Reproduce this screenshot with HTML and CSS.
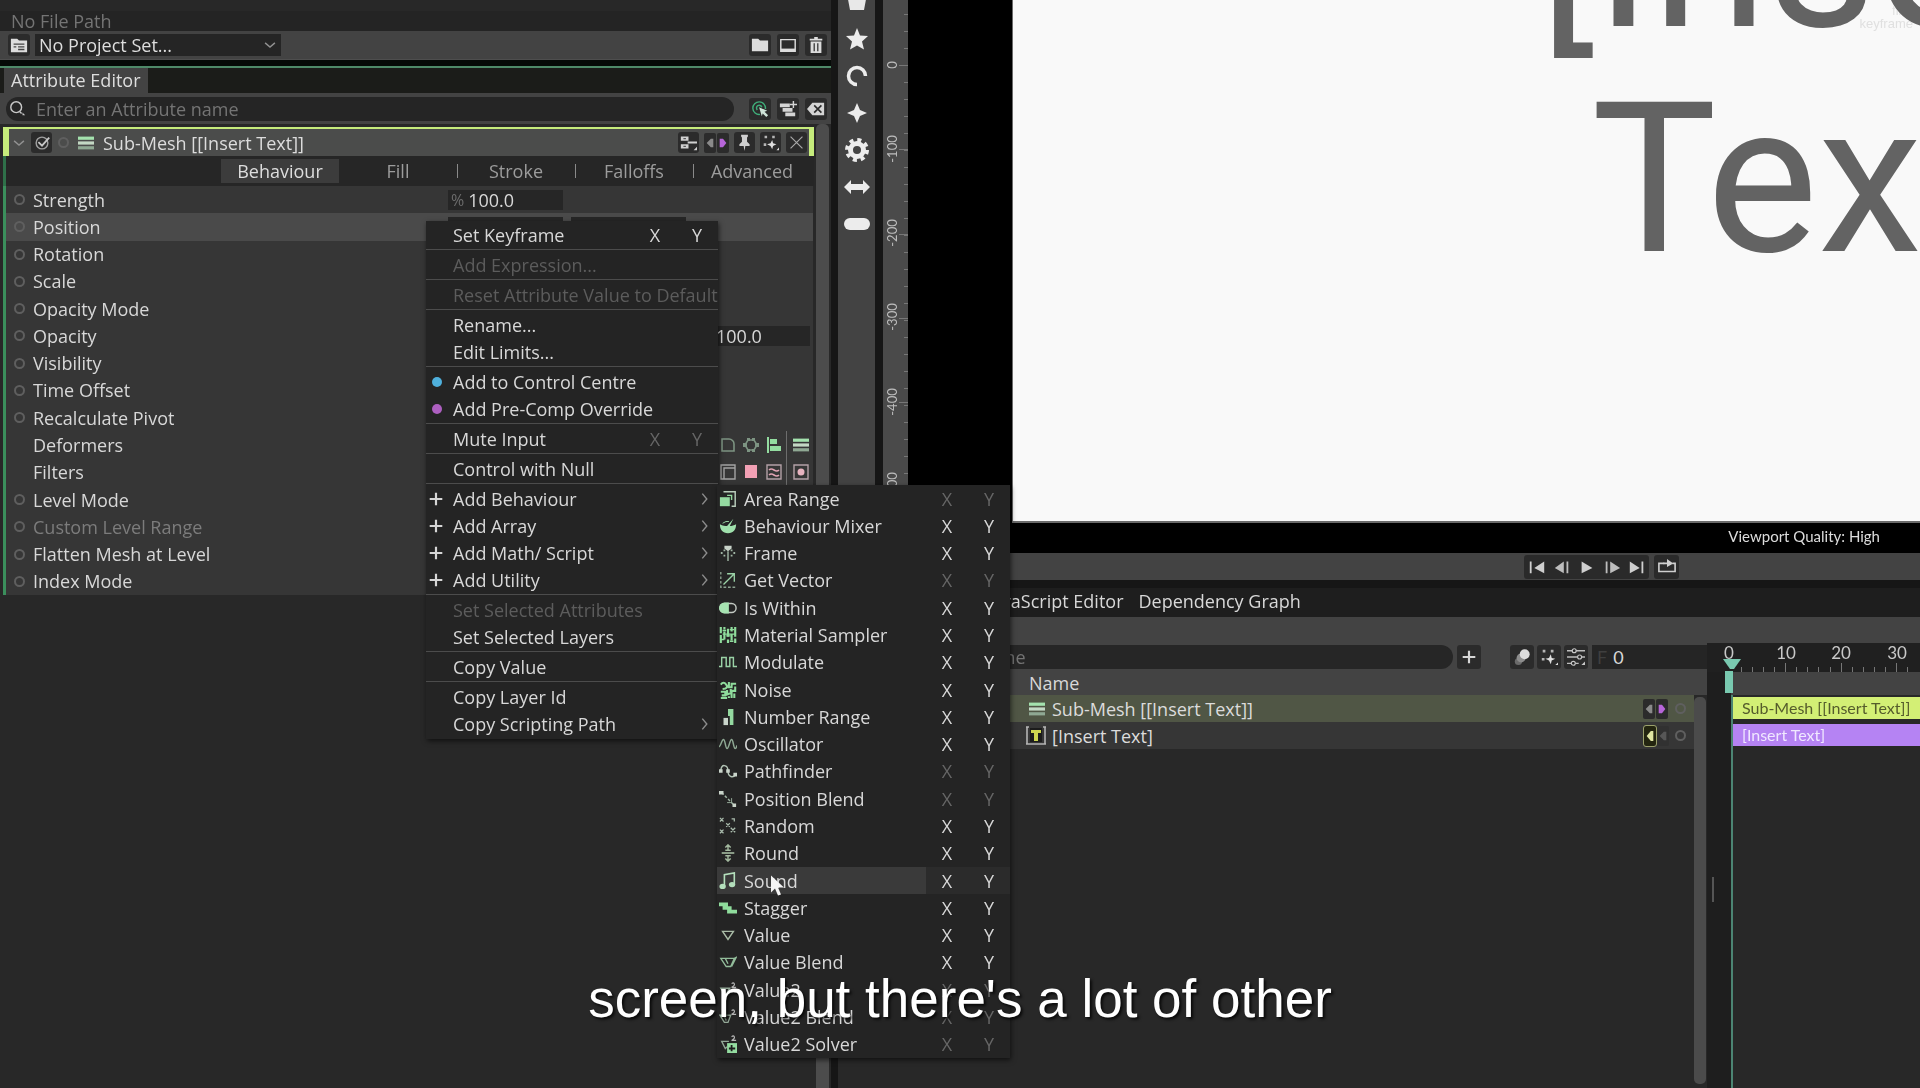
FILE: index.html
```html
<!DOCTYPE html>
<html lang="en">
<head>
<meta charset="utf-8">
<title>Attribute Editor</title>
<link rel="stylesheet" href="styles.css">
</head>
<body>
<svg class="defs" aria-hidden="true">
  <symbol id="i-library" viewBox="0 0 20 20"><path d="M1 3h7l2 2h9v13H1z" fill="#dcdcdc"/><path d="M4 9h12M4 12h3M9 12h7M9 15h7" stroke="#444" stroke-width="1.5"/></symbol>
  <symbol id="i-folder" viewBox="0 0 20 20"><path d="M1 3h7l2 2h9v12H1z" fill="#dcdcdc"/></symbol>
  <symbol id="i-screen" viewBox="0 0 20 20"><path d="M2 4h16v13H2z" fill="none" stroke="#dcdcdc" stroke-width="1.6"/><path d="M2 14h16v3H2z" fill="#dcdcdc"/></symbol>
  <symbol id="i-trash" viewBox="0 0 20 20"><path d="M3 3h5V1h4v2h5v2H3zM4 6h12v13H4z" fill="#dcdcdc"/><path d="M8 8v9M12 8v9" stroke="#333" stroke-width="1.4"/></symbol>
  <symbol id="i-search" viewBox="0 0 20 20"><circle cx="8" cy="8" r="6" fill="none" stroke="#c8c8c8" stroke-width="1.6"/><path d="M12 13l2 2" stroke="#c8c8c8" stroke-width="1.6"/><path d="M15 14l3 3h-3z" fill="#c8c8c8"/></symbol>
  <symbol id="i-target" viewBox="0 0 20 20"><path d="M10 16a7 7 0 1 1 6-6M7 11a3 3 0 1 1 5-3" fill="none" stroke="#3fae7a" stroke-width="1.6"/><path d="M9 8l9 4-3 1 4 4-2 2-4-4-1 3z" fill="#cfe3d8"/></symbol>
  <symbol id="i-stackadd" viewBox="0 0 20 20"><path d="M1 4h11v4H1zM4 9h11v4H4zM7 14h11v4H7z" fill="#d4d4d4"/><path d="M16 1v8M12 5h8" stroke="#d4d4d4" stroke-width="1.6"/></symbol>
  <symbol id="i-erase" viewBox="0 0 20 20"><path d="M6 3h13v14H6l-6-7z" fill="#d4d4d4"/><path d="M8 6l8 8M16 6l-8 8" stroke="#2a2a2a" stroke-width="1.8"/></symbol>
  <symbol id="i-lines" viewBox="0 0 20 20"><path d="M0 2h20v4H0z" fill="#a4e2ae"/><path d="M0 8h20v4H0z" fill="#c3d8c4"/><path d="M0 14h20v4H0z" fill="#8fa893"/></symbol>
  <symbol id="i-check" viewBox="0 0 20 20"><circle cx="10" cy="10" r="6.500" fill="none" stroke="#a0a0a0" stroke-width="1.6"/><path d="M6 9l4 4 8-9" fill="none" stroke="#c8c8c8" stroke-width="2"/></symbol>
  <symbol id="i-node" viewBox="0 0 20 20"><path d="M1 3h9v5H1zM1 12h9v5H1z" fill="#d0d0d0"/><path d="M4 5.500h3M4 14.500h3" stroke="#222"/><path d="M9 10h11" stroke="#d0d0d0" stroke-width="2.400"/><path d="M16 19l4-4v4z" fill="#d0d0d0"/></symbol>
  <symbol id="i-pin" viewBox="0 0 20 20"><path d="M6 1h8v2l-1 1v5l3 3v2h-5l-1 6-1-6H4v-2l3-3V4L6 3z" fill="#cfcfcf"/></symbol>
  <symbol id="i-sparkdots" viewBox="0 0 20 20"><path d="M3 2h3v3H3zM12 2h3v3h-3zM2 11h3v3H2z" fill="#b5b5b5"/><path d="M12 7l1 4 4 1-4 2-1 4-2-4-4-2 4-1zM17 19l3-3v3z" fill="#dedede"/></symbol>
  <symbol id="i-x" viewBox="0 0 20 20"><path d="M3 3l14 14M17 3L3 17" stroke="#a8a8a8" stroke-width="1.4"/></symbol>
  <symbol id="i-down" viewBox="0 0 20 20"><path d="M3 7l7 6 7-6" fill="none" stroke="#909090" stroke-width="2"/></symbol>
  <symbol id="i-right" viewBox="0 0 12 20"><path d="M3 4l5 6-5 6" fill="none" stroke="#8c8c8c" stroke-width="1.6"/></symbol>
  <symbol id="i-plus" viewBox="0 0 20 20"><path d="M10 3v14M3 10h14" stroke="#d6d6d6" stroke-width="2.4"/></symbol>
  <symbol id="i-left-arrow" viewBox="0 0 12 20"><path d="M10 5v10H7l-5-5 5-5z" fill="#8a8a8a"/></symbol>
  <symbol id="i-left-lime" viewBox="0 0 12 20"><path d="M10 4v12H7L2 10l5-6z" fill="#dfe5a2"/></symbol>
  <symbol id="i-right-purple" viewBox="0 0 12 20"><path d="M2 5v10h4l4-5-4-5z" fill="#b765d9"/></symbol>

  <symbol id="t-penta" viewBox="0 0 24 24"><path d="M2 4h20l-3 16H5z" fill="#e8e8e8"/></symbol>
  <symbol id="t-star" viewBox="0 0 24 24"><path d="M12 1l3 7.500 8 .500-6 5.500 2 8-7-4-7 4 2-8L1 9l8-.500z" fill="#ececec"/></symbol>
  <symbol id="t-arc" viewBox="0 0 24 24"><path d="M12 20.500A8.500 8.500 0 1 1 20.500 12" fill="none" stroke="#ececec" stroke-width="3.500"/></symbol>
  <symbol id="t-spark" viewBox="0 0 24 24"><path d="M12 2l3 7 7 3-7 3-3 7-3-7-7-3 7-3z" fill="#ececec"/></symbol>
  <symbol id="t-gear" viewBox="0 0 24 24"><circle cx="12" cy="12" r="6.500" fill="none" stroke="#ececec" stroke-width="5"/><circle cx="12" cy="12" r="10" fill="none" stroke="#ececec" stroke-width="4" stroke-dasharray="4 3.850"/></symbol>
  <symbol id="t-arrows" viewBox="0 0 26 24"><path d="M0 12l7-7v4h12V5l7 7-7 7v-4H7v4z" fill="#ececec"/></symbol>
  <symbol id="t-pill" viewBox="0 0 26 24"><rect y="6" width="26" height="12" rx="6" fill="#ececec"/></symbol>

  <symbol id="d-corner" viewBox="0 0 16 16"><path d="M2 2h7a5 5 0 0 1 5 5v7H2z" fill="none" stroke="#7d9482" stroke-width="1.6"/></symbol>
  <symbol id="d-hex" viewBox="0 0 16 16"><path d="M5 3h6l3 5-3 5H5L2 8z" fill="none" stroke="#7d9482" stroke-width="1.6"/><path d="M4 1h3v3H4zM9 1h3v3H9zM0 6h4v4H0zM12 6h4v4h-4zM4 12h3v3H4zM9 12h3v3H9z" fill="#7d9482"/></symbol>
  <symbol id="d-bars" viewBox="0 0 16 16"><path d="M1 0h2v16H1zM4 2h7v5H4zM4 9h11v5H4z" fill="#93dca0"/></symbol>
  <symbol id="f-frame" viewBox="0 0 16 16"><path d="M1 1h14v14H1zM4 15V4h11" fill="none" stroke="#a3a3a3" stroke-width="1.4"/></symbol>
  <symbol id="f-solid" viewBox="0 0 16 16"><path d="M2 1h12v13H2z" fill="#f2a0b4"/></symbol>
  <symbol id="f-wave" viewBox="0 0 16 16"><path d="M1 1h14v14H1z" fill="none" stroke="#b3a0a6" stroke-width="1.4"/><path d="M3 6q2-2 5 0t5 0M3 11q2-2 5 0t5 0" fill="none" stroke="#e0a3b3" stroke-width="1.6"/></symbol>
  <symbol id="f-dot" viewBox="0 0 16 16"><path d="M1 1h14v14H1z" fill="none" stroke="#b3a0a6" stroke-width="1.4"/><circle cx="8" cy="8" r="3.500" fill="#e7b3bf"/></symbol>

  <symbol id="b-area" viewBox="0 0 20 20"><path d="M5 2h13v16h-4" fill="none" stroke="#b9cdbc" stroke-width="1.6"/><path d="M1 8h11v10H1z" fill="#94d9a0"/><path d="M9 6h5v5" fill="none" stroke="#94d9a0" stroke-width="1.600"/></symbol>
  <symbol id="b-mixer" viewBox="0 0 20 20"><path d="M1 8c3 2 6 2 8 2l7-8-4 8c2 0 5-1 7-2 0 6-3 10-9 10S1 14 1 8z" fill="#9fe0ac"/><path d="M4 7q4-3 7-2" stroke="#9fe0ac" fill="none"/></symbol>
  <symbol id="b-frame" viewBox="0 0 20 20"><path d="M6 2h8v3l-4 3-4-3z" fill="#c9d4ca"/><path d="M10 8v11" stroke="#9fb5a3" stroke-width="1.6"/><path d="M2 10h2M16 10h2M5 7h2M13 7h2M5 13h2M13 13h2" stroke="#9fb5a3" stroke-width="2"/></symbol>
  <symbol id="b-vector" viewBox="0 0 20 20"><path d="M2 1v17h17" fill="none" stroke="#8ba290" stroke-width="1.500" stroke-dasharray="3 2"/><path d="M5 15L17 3M9 3h8v9" fill="none" stroke="#9ad2a6" stroke-width="1.500"/></symbol>
  <symbol id="b-within" viewBox="0 0 20 20"><rect x="1" y="5" width="18" height="10" rx="5" fill="none" stroke="#c3c9c3" stroke-width="1.600"/><path d="M11 4H6a6 6 0 0 0 0 12h5z" fill="#a6e3b1"/></symbol>
  <symbol id="b-material" viewBox="0 0 20 20"><path d="M2 1v7M2 10v9M6 1v3M6 6v9M10 3v9M10 15v4M14 1v5M14 9v7M18 1v11M18 14v5" stroke="#8fdc9c" stroke-width="2.400"/><path d="M4 5h4M8 11h5M12 4h5M2 15h4M12 17h4M4 9h14" stroke="#8fdc9c" stroke-width="1.600"/></symbol>
  <symbol id="b-modulate" viewBox="0 0 20 20"><path d="M0 15h3V5h5v10h4V5h4v10h4" fill="none" stroke="#9ad2a6" stroke-width="1.600"/></symbol>
  <symbol id="b-noise" viewBox="0 0 20 20"><path d="M2 4q3-4 6 0t-4 5M11 1v6h3V3h5M18 6v5h-5v-2M2 12h5v4H3M9 10v5l5-2v6M17 14v5M2 19h7M11 17v2" fill="none" stroke="#8fdc9c" stroke-width="2.300"/></symbol>
  <symbol id="b-number" viewBox="0 0 20 20"><path d="M5 11h5v8H5z" fill="#c9d4ca"/><path d="M10 1h6v18h-4V9h-2z" fill="#94d9a0"/></symbol>
  <symbol id="b-osc" viewBox="0 0 20 20"><path d="M0 13C2 13 3 5 5 5s2 10 4 10 3-10 5-10 2 10 4 10 1-3 2-3" fill="none" stroke="#8fa994" stroke-width="1.600"/></symbol>
  <symbol id="b-path" viewBox="0 0 20 20"><path d="M2 10c0-9 8-7 8 0s6 8 8 4" fill="none" stroke="#b3c4b6" stroke-width="1.600"/><path d="M0 8h4v4H0zM16 12h4v4h-4zM8 8h4v4H8z" fill="#c9d4ca"/></symbol>
  <symbol id="b-posblend" viewBox="0 0 20 20"><path d="M3 3l14 14" stroke="#9fb5a3" stroke-width="1.600" stroke-dasharray="3 2"/><path d="M0 1h5v4H0zM15 15h4v4h-4z" fill="#c9d4ca"/><path d="M14 9v5H9" fill="none" stroke="#9fb5a3"/></symbol>
  <symbol id="b-random" viewBox="0 0 20 20"><path d="M1 1l4 4M5 1L1 5M14 2h3v3M8 7l4 4M12 7l-4 4M1 14l4 4M5 14l-4 4M13 12l5 5M18 12l-5 5" fill="none" stroke="#a9bbac" stroke-width="1.400"/></symbol>
  <symbol id="b-round" viewBox="0 0 20 20"><path d="M3 10h14" stroke="#a3b99f" stroke-width="1.800"/><path d="M10 1v6M10 13v6M7 4l3-3 3 3M7 16l3 3 3-3M7 7h6M7 13h6" fill="none" stroke="#a3b99f" stroke-width="1.600"/></symbol>
  <symbol id="b-sound" viewBox="0 0 20 20"><path d="M6 16V3l11-2v13" fill="none" stroke="#b4dfbc" stroke-width="1.800"/><ellipse cx="4" cy="16" rx="3.500" ry="3" fill="#b4dfbc"/><ellipse cx="14.500" cy="14" rx="3.500" ry="3" fill="#b4dfbc"/></symbol>
  <symbol id="b-stagger" viewBox="0 0 20 20"><path d="M0 4h10v4H0zM4 8h10v4H4zM9 12h11v4H9z" fill="#8fdc9c"/></symbol>
  <symbol id="b-value" viewBox="0 0 20 20"><path d="M4 6h12l-6 9z" fill="none" stroke="#a9bba6" stroke-width="1.600"/></symbol>
  <symbol id="b-valueblend" viewBox="0 0 20 20"><path d="M2 6h15l-4 9H8zM7 6l3 6M17 6l2-1-5 10" fill="none" stroke="#93bd9b" stroke-width="1.500"/></symbol>
  <symbol id="b-value2" viewBox="0 0 20 20"><path d="M2 8h10l-5 8z" fill="none" stroke="#93a897" stroke-width="1.500"/><path d="M14 3q2-2 3 0t-3 4h5" fill="none" stroke="#b5b5b5" stroke-width="1.300"/></symbol>
  <symbol id="b-value2blend" viewBox="0 0 20 20"><path d="M1 8h12l-3 8H6zM6 9l2 5" fill="none" stroke="#93a897" stroke-width="1.500"/><path d="M14 3q2-2 3 0t-3 4h5" fill="none" stroke="#b5b5b5" stroke-width="1.300"/></symbol>
  <symbol id="b-value2solver" viewBox="0 0 20 20"><path d="M9 13l-2 2-4-8h8" fill="none" stroke="#93a897" stroke-width="1.500"/><path d="M14 2q2-2 3 0t-3 4h5" fill="none" stroke="#b5b5b5" stroke-width="1.300"/><path d="M9 9h11v11H9z" fill="#93dca0"/><path d="M14 11v7M11 15h7" stroke="#1c1c1c" stroke-width="2"/></symbol>

  <symbol id="p-first" viewBox="0 0 20 20"><path d="M2 4h2v13H2zM18 4v13l-11-6z" fill="#cfcfcf"/></symbol>
  <symbol id="p-prev" viewBox="0 0 20 20"><path d="M12 4v13L2 11zM15 4h2v13h-2z" fill="#bdbdbd"/></symbol>
  <symbol id="p-play" viewBox="0 0 20 20"><path d="M4 4l12 7-12 6z" fill="#cfcfcf"/></symbol>
  <symbol id="p-next" viewBox="0 0 20 20"><path d="M3 4h2v13H3zM8 4l11 7-11 6z" fill="#bdbdbd"/></symbol>
  <symbol id="p-last" viewBox="0 0 20 20"><path d="M2 4l11 7-11 6zM15 4h2v13h-2z" fill="#cfcfcf"/></symbol>
  <symbol id="p-loop" viewBox="0 0 20 20"><path d="M7 6H1v9h18V6h-3" fill="none" stroke="#cfcfcf" stroke-width="1.800"/><path d="M10 1l7 5-7 4V7H6V5h4z" fill="#cfcfcf"/></symbol>
  <symbol id="l-motion" viewBox="0 0 20 20"><circle cx="6" cy="15" r="4" fill="#6a6a6a"/><circle cx="9" cy="11" r="5" fill="#8d8d8d"/><circle cx="13" cy="7" r="5.500" fill="#dcdcdc"/></symbol>
  <symbol id="l-sliders" viewBox="0 0 20 20"><path d="M0 3h20M0 10h20M0 17h13" stroke="#bdbdbd" stroke-width="1.500"/><circle cx="8" cy="3" r="2.200" fill="#222" stroke="#c8c8c8" stroke-width="1.300"/><circle cx="14" cy="10" r="2.200" fill="#222" stroke="#c8c8c8" stroke-width="1.300"/><circle cx="7" cy="17" r="2.200" fill="#222" stroke="#c8c8c8" stroke-width="1.300"/><path d="M16 19l4-4v4z" fill="#c8c8c8"/></symbol>
  <symbol id="l-text" viewBox="0 0 20 20"><path d="M1 1v17h18V1M0 1h3M17 1h3M0 18h3M17 18h3" fill="none" stroke="#b5b5b5" stroke-width="1.600"/><path d="M4 2h12v14H4z" fill="#1c1c1c"/><path d="M5 4h10v3h-3v8H8V7H5z" fill="#cdd650"/></symbol>
</svg>

<main class="app">
  <section class="side">
    <div class="filepath">No File Path</div>
    <div class="project">
      <button class="ib" aria-label="Project library"><svg><use href="#i-library"/></svg></button>
      <button class="project-select"><span>No Project Set...</span><svg><use href="#i-down"/></svg></button>
      <div class="ibs push">
        <button class="ib" aria-label="Open folder"><svg><use href="#i-folder"/></svg></button>
        <button class="ib" aria-label="Show screen"><svg><use href="#i-screen"/></svg></button>
        <button class="ib" aria-label="Delete"><svg><use href="#i-trash"/></svg></button>
      </div>
    </div>
    <div class="panel-tabs"><button class="panel-tab">Attribute Editor</button></div>
    <div class="attr-search">
      <label class="search"><svg><use href="#i-search"/></svg><input type="text" placeholder="Enter an Attribute name" aria-label="Search attributes"></label>
      <div class="ibs">
        <button class="ib" aria-label="Follow selection"><svg><use href="#i-target"/></svg></button>
        <button class="ib" aria-label="Add to stack"><svg><use href="#i-stackadd"/></svg></button>
        <button class="ib" aria-label="Clear"><svg><use href="#i-erase"/></svg></button>
      </div>
    </div>
    <div class="attr-body">
      <div class="attr-main">
        <header class="card-head">
          <svg class="s14"><use href="#i-down"/></svg>
          <button class="ib" aria-label="Enabled"><svg><use href="#i-check"/></svg></button>
          <span class="ring"></span>
          <svg class="s16"><use href="#i-lines"/></svg>
          <h2>Sub-Mesh [[Insert Text]]</h2>
          <div class="head-tools">
            <button class="ib" aria-label="Connections"><svg><use href="#i-node"/></svg></button>
            <span class="pair"><svg><use href="#i-left-arrow"/></svg><svg><use href="#i-right-purple"/></svg></span>
            <button class="ib" aria-label="Pin"><svg><use href="#i-pin"/></svg></button>
            <button class="ib" aria-label="Effects"><svg><use href="#i-sparkdots"/></svg></button>
            <button class="ib" aria-label="Close"><svg><use href="#i-x"/></svg></button>
          </div>
        </header>
        <nav class="attr-tabs">
          <button class="on">Behaviour</button><button>Fill</button><button class="bar">Stroke</button><button class="bar">Falloffs</button><button class="bar">Advanced</button>
        </nav>
        <div class="props">
          <div class="prop"><span class="ring"></span><label for="strength">Strength</label><span class="field"><i>%</i><input id="strength" value="100.0"></span></div>
          <div class="prop active"><span class="ring"></span><label for="posx">Position</label><span class="field"><i>X</i><input id="posx"></span><span class="field"><i>Y</i><input aria-label="Position Y"></span></div>
          <div class="prop"><span class="ring"></span><span>Rotation</span></div>
          <div class="prop"><span class="ring"></span><span>Scale</span></div>
          <div class="prop"><span class="ring"></span><span>Opacity Mode</span></div>
          <div class="prop"><span class="ring"></span><label for="opacity">Opacity</label><span class="field wide"><input id="opacity" value="100.0"></span></div>
          <div class="prop"><span class="ring"></span><span>Visibility</span></div>
          <div class="prop"><span class="ring"></span><span>Time Offset</span></div>
          <div class="prop"><span class="ring"></span><span>Recalculate Pivot</span></div>
          <div class="prop"><span class="ring none"></span><span>Deformers</span><div class="mini"><svg><use href="#d-corner"/></svg><svg><use href="#d-hex"/></svg><svg><use href="#d-bars"/></svg><span class="last"><svg><use href="#i-lines"/></svg></span></div></div>
          <div class="prop"><span class="ring none"></span><span>Filters</span><div class="mini"><svg><use href="#f-frame"/></svg><svg><use href="#f-solid"/></svg><svg><use href="#f-wave"/></svg><span class="last"><svg><use href="#f-dot"/></svg></span></div></div>
          <div class="prop"><span class="ring"></span><span>Level Mode</span></div>
          <div class="prop off"><span class="ring"></span><span>Custom Level Range</span></div>
          <div class="prop"><span class="ring"></span><span>Flatten Mesh at Level</span></div>
          <div class="prop"><span class="ring"></span><span>Index Mode</span></div>
        </div>
      </div>
      <div class="scrollbar"></div>
    </div>
  </section>

  <section class="work">
    <div class="stage">
      <div class="tools">
        <button aria-label="Polygon"><svg><use href="#t-penta"/></svg></button>
        <button aria-label="Star"><svg><use href="#t-star"/></svg></button>
        <button aria-label="Arc"><svg><use href="#t-arc"/></svg></button>
        <button aria-label="Sparkle"><svg><use href="#t-spark"/></svg></button>
        <button aria-label="Gear"><svg><use href="#t-gear"/></svg></button>
        <button aria-label="Arrow"><svg><use href="#t-arrows"/></svg></button>
        <button aria-label="Capsule"><svg><use href="#t-pill"/></svg></button>
      </div>
      <svg class="ruler">
        <defs><pattern id="minor" y="65" width="25" height="17" patternUnits="userSpaceOnUse"><path d="M21 0.500h4" stroke="#777"/></pattern></defs>
        <rect width="25" height="100%" fill="url(#minor)"/>
        <path d="M16 65.500h9M16 149.500h9M16 234.500h9M16 318.500h9M16 402.500h9M16 486.500h9" stroke="#777"/>
        <g text-anchor="middle">
          <text transform="translate(14 65) rotate(-90)">0</text>
          <text transform="translate(14 149) rotate(-90)">-100</text>
          <text transform="translate(14 233) rotate(-90)">-200</text>
          <text transform="translate(14 317) rotate(-90)">-300</text>
          <text transform="translate(14 402) rotate(-90)">-400</text>
          <text transform="translate(14 486) rotate(-90)">-500</text>
        </g>
      </svg>
      <div class="viewport">
        <div class="canvas">
          <div class="canvas-text">[Insert<br>Text]</div>
          <div class="watermark">first<br>keyframe</div>
        </div>
        <div class="quality">Viewport Quality: High</div>
      </div>
    </div>
    <div class="transport">
      <div class="play">
        <button aria-label="First frame"><svg><use href="#p-first"/></svg></button><button aria-label="Previous frame"><svg><use href="#p-prev"/></svg></button><button aria-label="Play"><svg><use href="#p-play"/></svg></button><button aria-label="Next frame"><svg><use href="#p-next"/></svg></button><button aria-label="Last frame"><svg><use href="#p-last"/></svg></button>
      </div>
      <button class="loop" aria-label="Loop"><svg><use href="#p-loop"/></svg></button>
    </div>
    <div class="dock">
      <nav class="dock-tabs"><button>JavaScript Editor</button><button>Dependency Graph</button></nav>
      <div class="dock-strip"></div>
      <div class="dock-body">
        <div class="layers">
          <div class="layer-bar">
            <input class="layer-search" type="text" placeholder="Enter a Layer name" aria-label="Search layers">
            <button class="ib add" aria-label="Add layer"><svg><use href="#i-plus"/></svg></button>
            <div class="ibs">
              <button class="ib" aria-label="Motion blur"><svg><use href="#l-motion"/></svg></button>
              <button class="ib" aria-label="Effects"><svg><use href="#i-sparkdots"/></svg></button>
              <button class="ib" aria-label="Settings"><svg><use href="#l-sliders"/></svg></button>
            </div>
            <label class="frame"><i>F</i><input value="0" aria-label="Frame"></label>
          </div>
          <div class="layer-head">Name</div>
          <div class="layer-body">
            <div class="layer-list">
              <div class="layer sel"><svg class="s16"><use href="#i-lines"/></svg><span>Sub-Mesh [[Insert Text]]</span><span class="pair"><svg><use href="#i-left-arrow"/></svg><svg><use href="#i-right-purple"/></svg></span><span class="ring"></span></div>
              <div class="layer text"><svg class="s20"><use href="#l-text"/></svg><span>[Insert Text]</span><span class="pair lime"><svg><use href="#i-left-lime"/></svg><svg class="dim"><use href="#i-left-arrow"/></svg></span><span class="ring"></span></div>
            </div>
            <div class="layer-scroll"></div>
          </div>
        </div>
        <div class="splitter"></div>
        <div class="timeline">
          <svg class="frames">
            <path d="M34.500 24v5M45.500 24v5M56.500 24v5M67.500 24v5M78.500 20v9M89.500 24v5M100.500 24v5M111.500 24v5M123.500 24v5M134.500 20v9M145.500 24v5M156.500 24v5M167.500 24v5M178.500 24v5M189.500 20v9M200.500 24v5" stroke="#777"/>
            <g text-anchor="middle"><text x="22" y="16">0</text><text x="79" y="16">10</text><text x="134" y="16">20</text><text x="190" y="16">30</text></g>
          </svg>
          <div class="range"></div>
          <div class="clips">
            <div class="clip lime">Sub-Mesh [[Insert Text]]</div>
            <div class="clip purple">[Insert Text]</div>
          </div>
          <div class="playhead"><svg viewBox="0 0 18 34"><path d="M0 0h18l-7 10v0H7z" fill="#79c9b0"/><path d="M2 12h8v22H2z" fill="#79c9b0"/></svg></div>
        </div>
      </div>
    </div>
  </section>
</main>

<div class="menu context" role="menu">
  <div class="item"><button>Set Keyframe</button><button class="ax">X</button><button class="ax">Y</button></div>
  <hr>
  <div class="item off"><button>Add Expression...</button></div>
  <hr>
  <div class="item off"><button>Reset Attribute Value to Default</button></div>
  <hr>
  <div class="item"><button>Rename...</button></div>
  <div class="item"><button>Edit Limits...</button></div>
  <hr>
  <div class="item"><button><b class="dot blue"></b>Add to Control Centre</button></div>
  <div class="item"><button><b class="dot violet"></b>Add Pre-Comp Override</button></div>
  <hr>
  <div class="item"><button>Mute Input</button><button class="ax no">X</button><button class="ax no">Y</button></div>
  <hr>
  <div class="item"><button>Control with Null</button></div>
  <hr>
  <div class="item"><button><svg class="lead"><use href="#i-plus"/></svg>Add Behaviour<svg class="more"><use href="#i-right"/></svg></button></div>
  <div class="item"><button><svg class="lead"><use href="#i-plus"/></svg>Add Array<svg class="more"><use href="#i-right"/></svg></button></div>
  <div class="item"><button><svg class="lead"><use href="#i-plus"/></svg>Add Math/ Script<svg class="more"><use href="#i-right"/></svg></button></div>
  <div class="item"><button><svg class="lead"><use href="#i-plus"/></svg>Add Utility<svg class="more"><use href="#i-right"/></svg></button></div>
  <hr>
  <div class="item off"><button>Set Selected Attributes</button></div>
  <div class="item"><button>Set Selected Layers</button></div>
  <hr>
  <div class="item"><button>Copy Value</button></div>
  <hr>
  <div class="item"><button>Copy Layer Id</button></div>
  <div class="item"><button>Copy Scripting Path<svg class="more"><use href="#i-right"/></svg></button></div>
</div>

<div class="menu sub" role="menu">
  <div class="item"><button><svg><use href="#b-area"/></svg>Area Range</button><button class="ax no">X</button><button class="ax no">Y</button></div>
  <div class="item"><button><svg><use href="#b-mixer"/></svg>Behaviour Mixer</button><button class="ax">X</button><button class="ax">Y</button></div>
  <div class="item"><button><svg><use href="#b-frame"/></svg>Frame</button><button class="ax">X</button><button class="ax">Y</button></div>
  <div class="item"><button><svg><use href="#b-vector"/></svg>Get Vector</button><button class="ax no">X</button><button class="ax no">Y</button></div>
  <div class="item"><button><svg><use href="#b-within"/></svg>Is Within</button><button class="ax">X</button><button class="ax">Y</button></div>
  <div class="item"><button><svg><use href="#b-material"/></svg>Material Sampler</button><button class="ax">X</button><button class="ax">Y</button></div>
  <div class="item"><button><svg><use href="#b-modulate"/></svg>Modulate</button><button class="ax">X</button><button class="ax">Y</button></div>
  <div class="item"><button><svg><use href="#b-noise"/></svg>Noise</button><button class="ax">X</button><button class="ax">Y</button></div>
  <div class="item"><button><svg><use href="#b-number"/></svg>Number Range</button><button class="ax">X</button><button class="ax">Y</button></div>
  <div class="item"><button><svg><use href="#b-osc"/></svg>Oscillator</button><button class="ax">X</button><button class="ax">Y</button></div>
  <div class="item"><button><svg><use href="#b-path"/></svg>Pathfinder</button><button class="ax no">X</button><button class="ax no">Y</button></div>
  <div class="item"><button><svg><use href="#b-posblend"/></svg>Position Blend</button><button class="ax no">X</button><button class="ax no">Y</button></div>
  <div class="item"><button><svg><use href="#b-random"/></svg>Random</button><button class="ax">X</button><button class="ax">Y</button></div>
  <div class="item"><button><svg><use href="#b-round"/></svg>Round</button><button class="ax">X</button><button class="ax">Y</button></div>
  <div class="item hover"><button><svg><use href="#b-sound"/></svg>Sound</button><button class="ax">X</button><button class="ax">Y</button></div>
  <div class="item"><button><svg><use href="#b-stagger"/></svg>Stagger</button><button class="ax">X</button><button class="ax">Y</button></div>
  <div class="item"><button><svg><use href="#b-value"/></svg>Value</button><button class="ax">X</button><button class="ax">Y</button></div>
  <div class="item"><button><svg><use href="#b-valueblend"/></svg>Value Blend</button><button class="ax">X</button><button class="ax">Y</button></div>
  <div class="item"><button><svg><use href="#b-value2"/></svg>Value2</button><button class="ax no">X</button><button class="ax no">Y</button></div>
  <div class="item"><button><svg><use href="#b-value2blend"/></svg>Value2 Blend</button><button class="ax no">X</button><button class="ax no">Y</button></div>
  <div class="item"><button><svg><use href="#b-value2solver"/></svg>Value2 Solver</button><button class="ax no">X</button><button class="ax no">Y</button></div>
</div>

<svg class="cursor" viewBox="0 0 13 20"><path d="M0 0v17l4-4 3 7 3-1-3-7h6z" fill="#f4f4f4"/></svg>
<p class="caption">screen, but there's a lot of other</p>
</body>
</html>
```
FILE: styles.css
```css
* { box-sizing: border-box; }
body {
  margin: 0;
  height: 100vh;
  overflow: hidden;
  position: relative;
  background: #161616;
  color: #d8d8d8;
  font: 18px/24px "Open Sans", "Noto Sans", sans-serif;
}
button, input { font: inherit; color: inherit; border: 0; margin: 0; padding: 0; background: none; min-width: 0; }
button { text-align: left; }
svg { display: block; flex: none; }
h2 { margin: 0; font: inherit; }
i { font-style: normal; }
.defs { position: absolute; width: 0; height: 0; }
.app { display: grid; grid-template-columns: 831fr 1089fr; height: 100%; }
.s14 { width: 14px; height: 14px; }
.s16 { width: 16px; height: 16px; }
.s20 { width: 20px; height: 20px; }

/* left panel */
.side { display: flex; flex-direction: column; background: #282828; padding-top: 11px; min-width: 0; }
.filepath { height: 20px; padding-left: 11px; line-height: 20px; color: #747474; background: #242424; }
.project { display: flex; align-items: center; height: 29px; padding: 0 4px 0 8px; background: #434343; border-bottom: 1px solid #4e4e4e; }
.project-select { display: flex; align-items: center; justify-content: space-between; width: 246px; height: 22px; margin-left: 5px; padding: 0 4px; background: #252525; line-height: 22px; color: #dedede; }
.project-select svg { width: 14px; height: 14px; }
.push { margin-left: auto; }
.ibs { display: flex; gap: 6px; }
.ib { display: flex; align-items: center; justify-content: center; width: 22px; height: 22px; border-radius: 3px; background: #2b2b2b; flex: none; }
.ib svg { width: 18px; height: 18px; }
.panel-tabs { display: flex; height: 33px; padding: 0 0 0 4px; border-top: 6px solid #060a07; background: linear-gradient(#4f8a69, #4f8a69) 0 0 / 100% 2px no-repeat #1b1c19; }
.panel-tab { height: 25px; margin-top: 2px; padding: 0 7px 2px; background: #434343; color: #dedede; }
.attr-search { display: flex; align-items: center; justify-content: space-between; height: 31px; padding: 0 4px 0 6px; background: #434343; }
.search { display: flex; align-items: center; gap: 9px; width: 728px; height: 24px; padding-left: 3px; border-radius: 12px; background: #252525; }
.search svg { width: 18px; height: 18px; }
.search input { flex: 1; height: 24px; }
input::placeholder { color: #747474; opacity: 1; }
.attr-body { display: flex; flex: 1; }
.attr-main { flex: 1; min-width: 0; padding-top: 3px; }
.scrollbar { width: 13px; margin-right: 2px; background: #4c4c4c; border-radius: 5px 5px 0 0; }
.card-head { display: flex; align-items: center; gap: 5px; height: 29px; margin: 0 2px 0 3px; padding: 0 2px 0 3px; background: #4b4c4b; border: solid #c6ec7c; border-width: 2px 5px 0 6px; }
.card-head .ring { margin: 0 4px 0 1px; }
.card-head h2 { margin-left: 4px; color: #dcdcdc; }
.head-tools { display: flex; gap: 5px; margin-left: auto; }
.head-tools .ib, .card-head > .ib { width: 21px; height: 21px; }
.head-tools svg { width: 17px; height: 17px; }
.pair { display: flex; align-items: center; gap: 1px; flex: none; }
.pair svg, .head-tools .pair svg { width: 12px; height: 20px; padding: 0 1px; background: #2b2b2b; border-radius: 2px; }
.pair.lime svg:first-child { outline: 1px solid #9aa06a; background: #23250f; }
.pair .dim { opacity: .4; }
.ring { width: 11px; height: 11px; border: 2px solid #5f5f5f; border-radius: 50%; flex: none; }
.ring.none { visibility: hidden; }
.attr-tabs { display: grid; grid-template-columns: repeat(5, 1fr); align-items: center; height: 30px; margin: 0 2px 0 3px; padding: 0 3px 0 215px; background: #262626; border-left: 3px solid #2f7049; color: #9c9c9c; }
.attr-tabs button { height: 24px; text-align: center; }
.attr-tabs .on { background: #3c3c3c; color: #dedede; }
.attr-tabs .bar { background: linear-gradient(#8a8a8a, #8a8a8a) 0 5px / 1px 14px no-repeat; }
.props { display: grid; grid-auto-rows: 1fr; height: 409px; margin: 0 3px; border-left: 3px solid #3b8f5c; background: #363636; }
.prop { display: flex; align-items: center; gap: 8px; padding: 0 3px 0 8px; min-height: 0; }
.prop > label, .prop > span:nth-child(2) { width: 407px; flex: none; }
.prop.active { background: #4a4a4a; }
.prop.off { color: #7c7c7c; }
.field { display: flex; align-items: center; gap: 4px; width: 115px; height: 20px; padding-left: 3px; background: #262626; color: #d8d8d8; line-height: 20px; }
.field i { color: #6c6c6c; font-size: 16px; }
.field input { width: 80px; height: 20px; }
.field.wide { flex: 1; padding-left: 268px; }
.mini { display: flex; align-items: center; gap: 7px; margin-left: auto; padding-right: 1px; align-self: stretch; }
.mini svg { width: 16px; height: 16px; }
.mini .last { display: flex; align-items: center; align-self: stretch; margin-left: -3px; border-left: 1px solid #6d6d6d; padding-left: 6px; }

/* stage */
.work { display: flex; flex-direction: column; min-width: 0; padding-left: 7px; }
.stage { display: flex; flex: 553; min-height: 0; overflow: hidden; }
.tools { display: flex; flex-direction: column; gap: 13px; width: 37px; margin-right: 8px; align-items: center; background: #434343; overflow: hidden; }
.tools button { display: block; height: 24px; }
.tools button:first-child { margin-top: -10px; }
.tools svg { width: 26px; height: 24px; }
.ruler { width: 25px; height: 100%; background: #4a4a4a; }
.ruler text { font: 13px Lato, sans-serif; fill: #bdbdbd; }
.viewport { display: flex; flex-direction: column; flex: 1; min-width: 0; background: #000; }
.canvas { position: relative; flex: 1; margin-left: 104px; overflow: hidden; background: #f9f9f9; border: solid #6b6b6b; border-width: 0 0 2px 1px; }
.canvas-text { position: absolute; left: 526px; bottom: 229px; width: 560px; text-align: center; font: 210px/225px Roboto, sans-serif; color: #636363; }
.watermark { position: absolute; right: 7px; top: 4px; text-align: right; font: 13px/13px "Liberation Sans", Arial, sans-serif; color: #e0e0e0; mix-blend-mode: darken; }
.quality { height: 30px; padding-right: 40px; text-align: right; font: 15px/26px Lato, sans-serif; color: #dcdcdc; }
.transport { display: flex; gap: 5px; height: 27px; padding: 2px 0 0 686px; background: #434343; }
.play { display: flex; border-radius: 3px; background: #2a2a2a; height: 24px; }
.play button, .loop { display: flex; align-items: center; justify-content: center; width: 25px; height: 24px; }
.loop { background: #2a2a2a; border-radius: 3px; }
.play svg, .loop svg { width: 18px; height: 18px; }

/* dock */
.dock { display: flex; flex-direction: column; flex: 500; margin-top: 8px; background: #282828; }
.dock-tabs { display: flex; gap: 15px; height: 29px; padding: 0 0 3px 149px; align-items: center; background: #1e1e1e; color: #d8d8d8; }
.dock-strip { height: 26px; background: #434343; }
.dock-body { display: grid; grid-template-columns: 869fr 213fr; flex: 1; position: relative; }
.layers { display: flex; flex-direction: column; background: #282828; }
.layer-bar { display: flex; align-items: center; height: 28px; background: #434343; }
.layer-search { flex: 1; height: 24px; margin-left: 20px; padding-left: 5px; background: #262626; border-radius: 0 12px 12px 0; }
.layer-bar .add { margin: 0 29px 0 4px; }
.layer-bar .ib { width: 24px; height: 24px; }
.layer-bar .ibs { gap: 3px; margin-right: 4px; }
.frame { display: flex; gap: 6px; width: 115px; height: 24px; padding-left: 5px; background: #252525; font-family: Lato, sans-serif; }
.frame i { color: #3f3f3f; }
.frame input { width: 60px; }
.layer-head { height: 24px; padding-left: 191px; background: #434343; }
.layer-body { display: flex; flex: 1; }
.layer-list { flex: 1; }
.layer { display: flex; align-items: center; gap: 7px; height: 27px; padding: 0 8px 0 191px; background: #505645; color: #dcdcdc; }
.layer.text { padding-left: 188px; gap: 6px; background: #363636; }
.layer .pair { margin-left: auto; }
.layer-scroll { width: 12px; margin: 2px 1px 4px 0; border-radius: 5px; background: #4b4b4b; }
.splitter { position: absolute; left: 874px; top: 234px; width: 2px; height: 25px; background: #555; z-index: 1; }
.timeline { position: relative; display: flex; flex-direction: column; min-width: 0; overflow: hidden; background: linear-gradient(90deg, #1e1e1e 24px, #282828 24px); }
.frames { width: 100%; height: 29px; background: #202020; }
.frames text { font: 17px Lato, sans-serif; fill: #c8c8c8; }
.range { height: 23px; margin-left: 24px; background: #434343; }
.clips { flex: 1; display: flex; flex-direction: column; gap: 5px; margin-left: 24px; padding-top: 2px; border-left: 2px solid #4c8573; }
.clip { height: 22px; padding-left: 9px; overflow: hidden; white-space: nowrap; font: 16px/22px Lato, sans-serif; }
.clip.lime { background: #d3ef75; color: #555c2c; }
.clip.purple { background: #b583f3; color: #f0e8ff; }
.playhead { position: absolute; left: 16px; top: 16px; }
.playhead svg { width: 18px; height: 34px; }

/* menus */
.menu { position: absolute; background: #242424; color: #d8d8d8; box-shadow: 1px 2px 5px #0009; }
.menu hr { height: 1px; margin: 1px 0; border: 0; background: #4c4c4c; }
.item { display: flex; min-height: 0; }
.item button { display: flex; align-items: center; flex: 1; white-space: nowrap; }
.item .ax { flex: none; width: 42px; justify-content: center; }
.item .no { color: #666; }
.item.off { color: #5c5c5c; }
.context { left: 426px; top: 221px; width: 292px; padding-bottom: 2px; }
.context .item { height: 27px; }
.context .item button { padding-left: 27px; }
.context .item .ax { padding: 0; }
.dot { width: 10px; height: 10px; margin: 0 11px 0 -21px; border-radius: 50%; }
.blue { background: #4fb0dc; }
.violet { background: #ad5fc0; }
.lead { width: 18px; height: 18px; margin: 0 8px 0 -26px; }
.more { width: 12px; height: 18px; margin-left: auto; margin-right: 7px; }
.sub { display: grid; grid-auto-rows: 1fr; left: 717px; top: 485px; width: 293px; height: 573px; }
.sub svg { width: 18px; height: 18px; margin: 0 7px 0 2px; }
.hover { background: #2b2b2b; }
.hover button:first-child { background: #3a3a3a; }
.cursor { position: absolute; left: 771px; top: 875px; width: 13px; height: 21px; }
.caption { position: absolute; left: 0; right: 0; bottom: 59px; margin: 0; text-align: center; font: 53px/60px "Liberation Sans", Arial, sans-serif; color: #fff; text-shadow: 2px 2px 3px #000c; }
```
